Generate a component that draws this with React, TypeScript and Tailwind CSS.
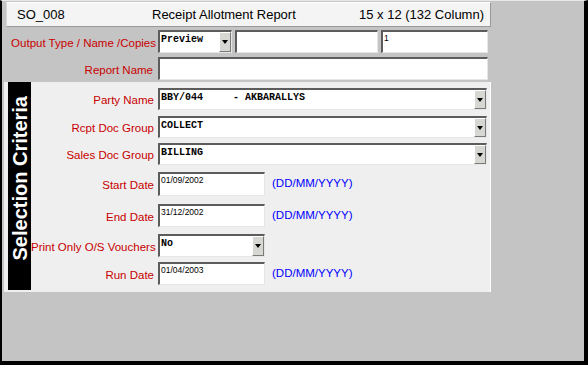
import React from "react"

const label = "text-[11.5px] text-[#c80000] font-['Liberation_Sans',Arial,sans-serif] leading-none whitespace-nowrap"
const sunken =
  "bg-white border-t-2 border-l-2 border-b border-r border-t-[#5c5c5c] border-l-[#5c5c5c] border-b-[#e6e6e6] border-r-[#e6e6e6]"
const monoVal = "font-['Liberation_Mono',monospace] font-bold text-[10px] leading-none text-black whitespace-pre"
const dateVal = "font-['Liberation_Sans',Arial,sans-serif] text-[8.5px] leading-none text-black"

function DropButton() {
  return (
    <div className="flex w-[12px] shrink-0 items-center justify-center border border-t-white border-l-white border-b-[#7a7a7a] border-r-[#7a7a7a] bg-[#d6d6d2]">
      <div className="h-0 w-0 border-x-[3px] border-t-[4px] border-x-transparent border-t-black" />
    </div>
  )
}

function Combo({ value, width }: { value: string; width: string }) {
  return (
    <div className={`${sunken} ${width} flex h-full`}>
      <div className={`flex-1 pl-[1px] pt-[3px] ${monoVal}`}>{value}</div>
      <DropButton />
    </div>
  )
}

function DateBox({ value }: { value: string }) {
  return (
    <>
      <div className={`${sunken} h-full w-[107px] pl-[1px] pt-[2px] ${dateVal}`}>{value}</div>
      <span className="ml-[7px] font-['Liberation_Sans',Arial,sans-serif] text-[11.5px] leading-none text-[#0000ff]">
        (DD/MM/YYYY)
      </span>
    </>
  )
}

function PanelRow({
  text,
  mt,
  h,
  children,
}: {
  text: string
  mt: string
  h: string
  children: React.ReactNode
}) {
  return (
    <div className={`flex items-center ${mt} ${h}`}>
      <div className="w-[124px] pr-[1px] text-right">
        <span className={label}>{text}</span>
      </div>
      <div className="ml-[3px] flex h-full items-center">{children}</div>
    </div>
  )
}

export default function App() {
  return (
    <div className="h-[365px] w-[588px] overflow-hidden border-t border-l-2 border-r-4 border-b-4 border-t-[#e8e8e8] border-l-black border-r-black border-b-black bg-[#c4c4c4] pl-[2px] font-['Liberation_Sans',Arial,sans-serif]">
      {/* Header */}
      <div className="mt-[1px] ml-[2px] flex h-[25px] w-[485px] items-center border border-t-white border-l-[#d8d8d8] border-b-[#9a9a9a] border-r-[#9a9a9a] bg-[#f4f4f4] text-[13px] text-black">
        <span className="ml-[10px] w-[135px]">SO_008</span>
        <span>Receipt Allotment Report</span>
        <span className="ml-auto mr-[6px]">15 x 12 (132 Column)</span>
      </div>

      {/* Output row */}
      <div className="mt-[3px] flex h-[23px] items-center">
        <div className="w-[152px] text-right">
          <span className={label}>Output Type / Name /Copies</span>
        </div>
        <div className="ml-[2px] flex h-full gap-[3px]">
          <Combo value="Preview" width="w-[74px]" />
          <div className={`${sunken} h-full w-[143px]`} />
          <div className={`${sunken} h-full w-[107px] pl-[1px] pt-[2px] ${dateVal}`}>1</div>
        </div>
      </div>

      {/* Report name row */}
      <div className="mt-[4px] flex h-[23px] items-center">
        <div className="w-[149px] text-right">
          <span className={label}>Report Name</span>
        </div>
        <div className={`ml-[5px] h-full w-[330px] ${sunken}`} />
      </div>

      {/* Selection criteria panel */}
      <div className="mt-[2px] flex h-[210px] w-[487px] border-r border-r-white bg-[#efefef] pb-[2px] pl-[4px]">
        <div className="flex w-[23px] items-center justify-center bg-black pb-[16px]">
          <span className="rotate-180 whitespace-nowrap text-[20px] font-bold leading-none text-white [writing-mode:vertical-rl]">
            Selection Criteria
          </span>
        </div>
        <div className="flex flex-col">
          <PanelRow text="Party Name" mt="mt-[6px]" h="h-[22px]">
            <Combo value={"BBY/044     - AKBARALLYS"} width="w-[329px]" />
          </PanelRow>
          <PanelRow text="Rcpt Doc Group" mt="mt-[6px]" h="h-[22px]">
            <Combo value="COLLECT" width="w-[329px]" />
          </PanelRow>
          <PanelRow text="Sales Doc Group" mt="mt-[5px]" h="h-[22px]">
            <Combo value="BILLING" width="w-[329px]" />
          </PanelRow>
          <PanelRow text="Start Date" mt="mt-[7px]" h="h-[24px]">
            <DateBox value="01/09/2002" />
          </PanelRow>
          <PanelRow text="End Date" mt="mt-[8px]" h="h-[23px]">
            <DateBox value="31/12/2002" />
          </PanelRow>
          <PanelRow text="Print Only O/S Vouchers" mt="mt-[7px]" h="h-[23px]">
            <Combo value="No" width="w-[107px]" />
          </PanelRow>
          <PanelRow text="Run Date" mt="mt-[5px]" h="h-[23px]">
            <DateBox value="01/04/2003" />
          </PanelRow>
        </div>
      </div>
    </div>
  )
}
